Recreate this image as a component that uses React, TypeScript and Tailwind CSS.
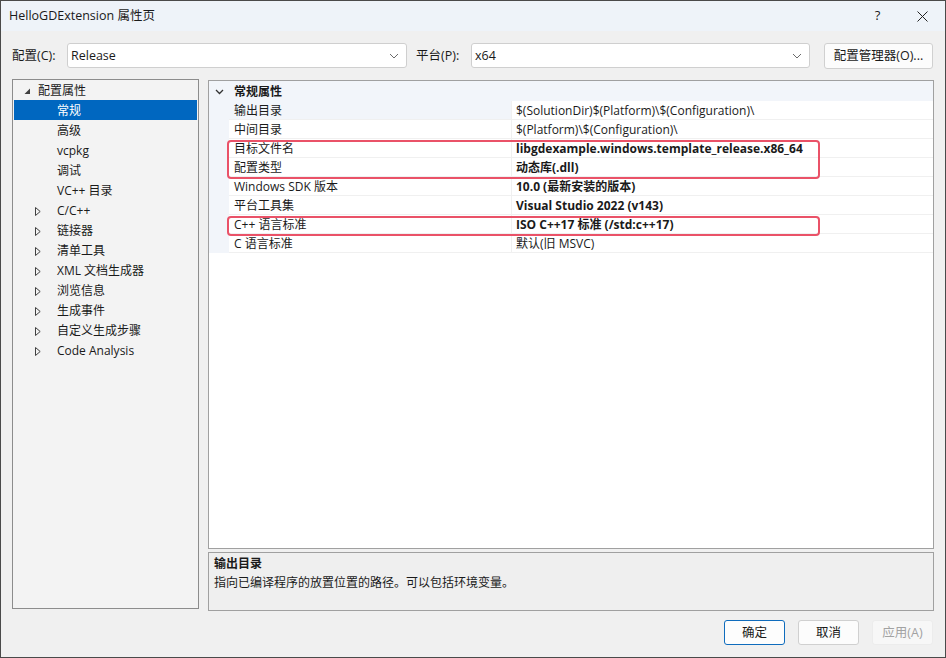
import React from "react";

const font = { fontFamily: '"Open Sans", "Noto Sans CJK SC", sans-serif' };

type TreeItem = { label: string; level: number; arrow?: "open" | "closed"; selected?: boolean };

const tree: TreeItem[] = [
  { label: "配置属性", level: 0, arrow: "open" },
  { label: "常规", level: 1, selected: true },
  { label: "高级", level: 1 },
  { label: "vcpkg", level: 1 },
  { label: "调试", level: 1 },
  { label: "VC++ 目录", level: 1 },
  { label: "C/C++", level: 1, arrow: "closed" },
  { label: "链接器", level: 1, arrow: "closed" },
  { label: "清单工具", level: 1, arrow: "closed" },
  { label: "XML 文档生成器", level: 1, arrow: "closed" },
  { label: "浏览信息", level: 1, arrow: "closed" },
  { label: "生成事件", level: 1, arrow: "closed" },
  { label: "自定义生成步骤", level: 1, arrow: "closed" },
  { label: "Code Analysis", level: 1, arrow: "closed" },
];

const props: { name: string; value: string; bold?: boolean }[] = [
  { name: "输出目录", value: "$(SolutionDir)$(Platform)\\$(Configuration)\\" },
  { name: "中间目录", value: "$(Platform)\\$(Configuration)\\" },
  { name: "目标文件名", value: "libgdexample.windows.template_release.x86_64", bold: true },
  { name: "配置类型", value: "动态库(.dll)", bold: true },
  { name: "Windows SDK 版本", value: "10.0 (最新安装的版本)", bold: true },
  { name: "平台工具集", value: "Visual Studio 2022 (v143)", bold: true },
  { name: "C++ 语言标准", value: "ISO C++17 标准 (/std:c++17)", bold: true },
  { name: "C 语言标准", value: "默认(旧 MSVC)" },
];

function Chevron() {
  return (
    <svg width="10" height="6" viewBox="0 0 10 6" className="shrink-0">
      <polyline points="1,1 5,5 9,1" fill="none" stroke="#6b6b6b" strokeWidth="1" />
    </svg>
  );
}

function Combo({ value, width }: { value: string; width: string }) {
  return (
    <div className={`${width} flex h-[25px] items-center justify-between rounded-[3px] border border-[#cfcfcf] bg-white pl-[3px] pr-[7px] pt-px`}>
      <span className="text-[12.5px] text-[#1a1a1a]">{value}</span>
      <Chevron />
    </div>
  );
}

function TreeArrow({ kind }: { kind: "open" | "closed" }) {
  if (kind === "open")
    return (
      <svg width="7" height="7" viewBox="0 0 7 7">
        <polygon points="6,0.5 6,6 0.5,6" fill="#404040" />
      </svg>
    );
  return (
    <svg width="6" height="9" viewBox="0 0 6 9">
      <polygon points="0.5,0.5 5.2,4.5 0.5,8.5" fill="none" stroke="#404040" strokeWidth="1" />
    </svg>
  );
}

function Button({ label, primary, disabled }: { label: string; primary?: boolean; disabled?: boolean }) {
  return (
    <div
      className={`flex h-[25px] w-[61px] items-center justify-center rounded-[3px] border pt-px text-[12.5px] ${
        primary
          ? "border-[#0f6cbd] bg-[#fdfdfd] text-[#1a1a1a]"
          : disabled
          ? "border-[#ececec] bg-[#f7f7f7] text-[#a2a2a2]"
          : "border-[#d0d0d0] bg-[#fcfcfc] text-[#1a1a1a]"
      }`}
    >
      {label}
    </div>
  );
}

export default function App() {
  return (
    <div style={font} className="flex h-[658px] w-[946px] flex-col overflow-hidden border border-[#4a4a4a] bg-[#f0f0f0] text-[12px] text-[#1a1a1a]">
      {/* title bar */}
      <div className="flex h-[30px] shrink-0 items-center justify-between bg-[#eef3f9] pl-[8px]">
        <span className="text-[12.5px]">HelloGDExtension 属性页</span>
        <div className="flex items-center">
          <span className="w-[45px] text-center text-[13px]">?</span>
          <div className="flex w-[45px] justify-center">
            <svg width="11" height="11" viewBox="0 0 11 11">
              <path d="M0.5 0.5 L10.5 10.5 M10.5 0.5 L0.5 10.5" stroke="#222" strokeWidth="1" />
            </svg>
          </div>
        </div>
      </div>

      {/* config row */}
      <div className="mt-[12px] flex h-[25px] items-center pl-[11px] pr-[12px] text-[12.5px]">
        <span className="w-[55px] pt-px">配置(C):</span>
        <Combo value="Release" width="w-[340px]" />
        <span className="ml-[9px] w-[55px] pt-px">平台(P):</span>
        <Combo value="x64" width="w-[339px]" />
        <div className="ml-[14px] flex h-[26px] flex-1 items-center justify-center rounded-[3px] border border-[#d0d0d0] bg-[#fcfcfc] pt-px">
          配置管理器(O)...
        </div>
      </div>

      {/* main */}
      <div className="mt-[11px] flex h-[532px] pl-[11px] pr-[11px]">
        {/* tree */}
        <div className="h-[530px] w-[187px] shrink-0 border border-[#8c8c8c] bg-[#f3f3f3] px-px">
          {tree.map((t) => (
            <div
              key={t.label}
              className={`flex h-[20px] items-center pt-[2px] ${t.selected ? "bg-[#0067c0] text-white" : ""}`}
            >
              <div className={`flex justify-center ${t.level === 0 ? "w-[24px] pl-[2px]" : "w-[34px] pl-[14px]"}`}>
                {t.arrow && <TreeArrow kind={t.arrow} />}
              </div>
              <span className={t.level === 0 ? "" : "pl-[9px]"}>{t.label}</span>
            </div>
          ))}
        </div>

        {/* right column */}
        <div className="ml-[9px] flex flex-1 flex-col">
          <div className="relative mt-px h-[469px] border border-[#a0a0a0] bg-white">
            <div className="flex h-[20px] items-center bg-[#f2f5fa] pt-[2px]">
              <div className="flex w-[20px] justify-center">
                <svg width="9" height="6" viewBox="0 0 9 6">
                  <polyline points="1,1 4.5,4.5 8,1" fill="none" stroke="#333" strokeWidth="1.3" />
                </svg>
              </div>
              <span className="pl-[5px] font-bold">常规属性</span>
            </div>
            {props.map((p, i) => (
              <div key={p.name} className="flex h-[19px]">
                <div className="w-[20px] bg-[#f2f5fa]" />
                <div
                  className={`flex w-[283px] items-center border-b border-r border-[#f0f0f0] pl-[5px] pt-[2px] ${
                    i === 0 ? "bg-[#f2f5fa]" : ""
                  }`}
                >
                  {p.name}
                </div>
                <div className={`flex flex-1 items-center border-b border-[#f0f0f0] pl-[4px] pt-[2px] ${p.bold ? "font-bold" : ""}`}>
                  {p.value}
                </div>
              </div>
            ))}

            {/* annotations */}
            <div className="absolute left-[18px] top-[59px] h-[39px] w-[593px] rounded-[4px] border-2 border-[#ea5268]" />
            <div className="absolute left-[18px] top-[135px] h-[20px] w-[593px] rounded-[4px] border-2 border-[#ea5268]" />
          </div>

          <div className="mt-[3px] h-[59px] border border-[#a0a0a0] bg-[#efefef] px-[5px] pt-[1px]">
            <div className="font-bold leading-[19px]">输出目录</div>
            <div className="leading-[19px]">指向已编译程序的放置位置的路径。可以包括环境变量。</div>
          </div>
        </div>
      </div>

      {/* buttons */}
      <div className="mt-[9px] flex justify-end gap-[13px] pr-[12px]">
        <Button label="确定" primary />
        <Button label="取消" />
        <Button label="应用(A)" disabled />
      </div>
    </div>
  );
}
